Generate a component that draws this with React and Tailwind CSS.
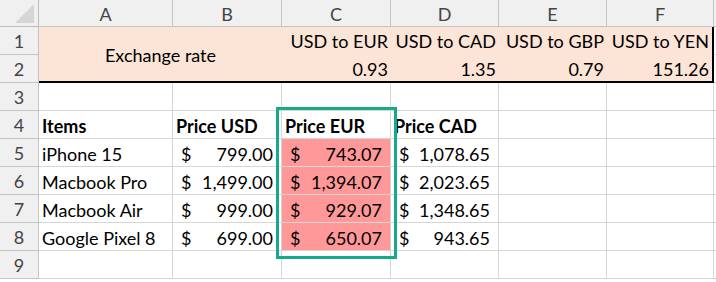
const cols = ['A', 'B', 'C', 'D', 'E', 'F'];

const items = [
  { name: 'iPhone 15', usd: '799.00', eur: '743.07', cad: '1,078.65' },
  { name: 'Macbook Pro', usd: '1,499.00', eur: '1,394.07', cad: '2,023.65' },
  { name: 'Macbook Air', usd: '999.00', eur: '929.07', cad: '1,348.65' },
  { name: 'Google Pixel 8', usd: '699.00', eur: '650.07', cad: '943.65' },
];

const rates = [
  { label: 'USD to EUR', value: '0.93' },
  { label: 'USD to CAD', value: '1.35' },
  { label: 'USD to GBP', value: '0.79' },
  { label: 'USD to YEN', value: '151.26' },
];

const cell = 'border-r border-b border-[#d6d6d6] px-[3px] pt-[3px] flex items-center whitespace-nowrap';
const rowHead = 'border-r border-b border-[#c4c4c4] bg-[#f0f0f0] text-[#444] flex items-center justify-center pt-[2px]';

// accounting style: $ on the left, amount on the right
const Money = ({ value, fill }) => (
  <div className={`${cell} justify-between !px-[8px] ${fill ? 'bg-[#ff9999]' : ''}`}>
    <span>$</span>
    <span>{value}</span>
  </div>
);

const App = () => {
  return (
    <div
      className="relative w-[716px] h-[282px] overflow-hidden bg-white text-[18px] text-black"
      style={{ fontFamily: 'Lato, "Open Sans", sans-serif' }}
    >
      <div className="grid grid-cols-[39px_134px_109px_109px_108px_108px_107px_20px] grid-rows-[27px_repeat(9,28px)]">
        {/* Column headers */}
        <div className="relative border-r border-b border-[#bdbdbd] bg-[#f0f0f0]">
          <svg className="absolute right-[4px] bottom-[3px]" width="19" height="19" viewBox="0 0 20 20">
            <polygon points="20,0 20,20 0,20" fill="#d6d6d6" />
          </svg>
        </div>
        {cols.map((c) => (
          <div key={c} className="border-r border-b border-[#c4c4c4] bg-[#f0f0f0] text-[#444] flex items-center justify-center pt-[2px]">
            {c}
          </div>
        ))}
        <div className="border-b border-[#c4c4c4] bg-[#f0f0f0]" />

        {/* Rows 1-2: exchange rates */}
        <div className={rowHead}>1</div>
        <div className="col-span-2 row-span-2 bg-[#fce4d6] border-b-2 border-black flex items-center justify-center pt-[2px]">
          Exchange rate
        </div>
        {rates.map((r, i) => (
          <div
            key={r.label}
            className={`bg-[#fce4d6] px-[3px] flex items-end justify-end whitespace-nowrap ${i === 3 ? 'border-r-2 border-black' : ''}`}
          >
            {r.label}
          </div>
        ))}
        <div className="border-b border-[#d6d6d6]" />

        <div className={rowHead}>2</div>
        {rates.map((r, i) => (
          <div
            key={r.value}
            className={`bg-[#fce4d6] px-[3px] pt-[2px] flex items-center justify-end border-b-2 border-black ${i === 3 ? 'border-r-2' : ''}`}
          >
            {r.value}
          </div>
        ))}
        <div className="border-b border-[#d6d6d6]" />

        {/* Row 3 */}
        <div className={rowHead}>3</div>
        {cols.map((c) => (
          <div key={c} className={cell} />
        ))}
        <div className="border-b border-[#d6d6d6]" />

        {/* Row 4: headings */}
        <div className={rowHead}>4</div>
        <div className={`${cell} font-bold`}>Items</div>
        <div className={`${cell} font-bold`}>Price USD</div>
        <div className={`${cell} font-bold`}>Price EUR</div>
        <div className={`${cell} font-bold`}>Price CAD</div>
        <div className={cell} />
        <div className={cell} />
        <div className="border-b border-[#d6d6d6]" />

        {/* Rows 5-8: items */}
        {items.map((it, i) => (
          <div key={it.name} className="contents">
            <div className={rowHead}>{i + 5}</div>
            <div className={cell}>{it.name}</div>
            <Money value={it.usd} />
            <Money value={it.eur} fill />
            <Money value={it.cad} />
            <div className={cell} />
            <div className={cell} />
            <div className="border-b border-[#d6d6d6]" />
          </div>
        ))}

        {/* Row 9 */}
        <div className={rowHead}>9</div>
        {cols.map((c) => (
          <div key={c} className={cell} />
        ))}
        <div className="border-b border-[#d6d6d6]" />
      </div>

      {/* Highlight box around Price EUR */}
      <div className="absolute left-[276px] top-[107px] w-[121px] h-[152px] border-[3px] border-[#17a98c] pointer-events-none" />
    </div>
  );
};

export default App;
